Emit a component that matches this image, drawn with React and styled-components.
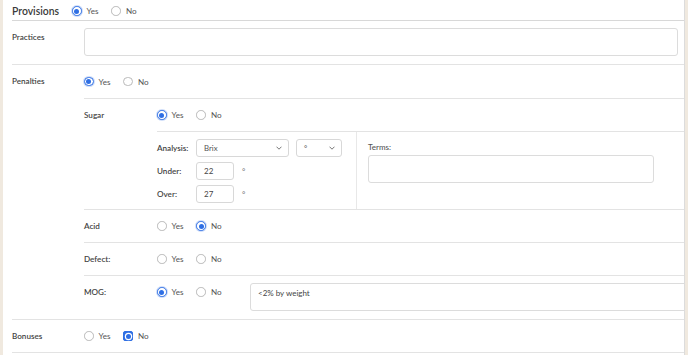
import React from 'react';
import styled, { createGlobalStyle, css } from 'styled-components';

const Global = createGlobalStyle`
  html, body { margin: 0; padding: 0; background: #f0e9df; }
  body { font-family: Lato, "Open Sans", sans-serif; color: #3d3d3d; }
  * { box-sizing: border-box; }
`;

const LINE = '#e3e3e3';
const BLUE = '#2f6fe4';

const Page = styled.div`
  display: flex;
  min-height: 100vh;
  padding: 0 3px;
  background: #f0e9df;
`;

const Panel = styled.main`
  flex: 1;
  min-width: 0;
  background: #fff;
  border-right: 1px solid #dcdcdc;
  padding-left: 9px;
  overflow: hidden;
`;

const Header = styled.header`
  display: flex;
  align-items: center;
  height: 21px;
  padding-top: 2px;
  border-bottom: 1px solid #d8d8d8;
`;

const Title = styled.h2`
  margin: 0;
  width: 60px;
  font-size: 10.4px;
  font-weight: 600;
  color: #3b3b3b;
`;

const Section = styled.section`
  display: grid;
  grid-template-columns: 72px 1fr;
  border-bottom: 1px solid ${LINE};
`;

const SubSection = styled.div`
  display: grid;
  grid-template-columns: 73px 1fr;
  ${p => p.$line && css`border-bottom: 1px solid ${LINE};`}
`;

const Label = styled.div`
  height: 32px;
  display: flex;
  align-items: center;
  font-size: 8.1px;
  font-weight: 600;
  color: #444;
`;

const Body = styled.div`
  min-width: 0;
  padding: ${p => p.$pad || '0'};
  ${p => p.$row && css`display: flex; align-items: flex-start;`}
`;

const RadioRow = styled.div`
  box-sizing: content-box;
  display: flex;
  align-items: center;
  gap: 13px;
  height: ${p => p.$h || 32}px;
  ${p => p.$w && css`flex: 0 0 ${p.$w}px;`}
  ${p => p.$line && css`border-bottom: 1px solid ${LINE};`}
`;

const Option = styled.label`
  display: inline-flex;
  align-items: center;
  gap: 5px;
  font-size: 8.1px;
  color: #555;
`;

const Dot = styled.span`
  width: 9.5px;
  height: 9.5px;
  border-radius: 50%;
  border: 1px solid ${p => (p.$on ? BLUE : '#b9b9b9')};
  background: #fff;
  display: grid;
  place-items: center;
  ${p => p.$on && css`box-shadow: 0 0 0 1px rgba(47, 111, 228, 0.22);`}
  ${p => p.$focus && css`
    border-radius: 2px;
    background: ${BLUE};
    box-shadow: none;
  `}
  &::after {
    content: '';
    width: 5px;
    height: 5px;
    border-radius: 50%;
    background: ${p => (p.$on ? BLUE : 'transparent')};
    ${p => p.$focus && css`box-shadow: 0 0 0 1.2px #fff;`}
  }
`;

const Details = styled.div`
  display: grid;
  grid-template-columns: 200px 1fr;
`;

const Measures = styled.div`
  display: flex;
  flex-direction: column;
  gap: 5px;
  padding: 7px 0 6px;
  border-right: 1px solid #e8e8e8;
`;

const MeasureRow = styled.div`
  display: flex;
  align-items: center;
  height: 18px;
`;

const MeasureLabel = styled.span`
  width: 39px;
  font-size: 8.1px;
  font-weight: 600;
  color: #444;
`;

const Select = styled.div`
  display: flex;
  align-items: center;
  justify-content: space-between;
  width: ${p => p.$w}px;
  height: 18px;
  padding: 0 6px 0 7px;
  border: 1px solid #d8d8d8;
  border-radius: 3px;
  font-size: 7.8px;
  color: #555;
  & + & { margin-left: 7px; }
`;

const Field = styled.input`
  width: 38px;
  height: 18px;
  padding: 0 0 0 7px;
  border: 1px solid #d8d8d8;
  border-radius: 3px;
  font: inherit;
  font-size: 8px;
  color: #444;
  outline: none;
`;

const Unit = styled.span`
  margin-left: 8px;
  font-size: 8px;
  color: #777;
`;

const Terms = styled.div`
  padding: 10px 0 0 11px;
`;

const TermsLabel = styled.div`
  font-size: 8px;
  line-height: 10px;
  font-weight: 500;
  color: #555;
  margin-bottom: 3px;
`;

const TextBox = styled.textarea`
  display: block;
  width: ${p => (p.$w ? `${p.$w}px` : '100%')};
  height: 28px;
  flex-shrink: 0;
  margin: ${p => p.$m || '0'};
  padding: 4px 7px;
  border: 1px solid #dcdcdc;
  border-radius: 3px;
  font: inherit;
  font-size: 8px;
  line-height: 10px;
  color: #444;
  resize: none;
  outline: none;
  background: #fff;
`;

const Chevron = () => (
  <svg width="6" height="4" viewBox="0 0 6 4">
    <polyline points="0.5,0.7 3,3.2 5.5,0.7" fill="none" stroke="#666" strokeWidth="0.9" />
  </svg>
);

const YesNo = ({ value, focus, h, w, line }) => (
  <RadioRow $h={h} $w={w} $line={line}>
    <Option><Dot $on={value === 'yes'} />Yes</Option>
    <Option><Dot $on={value === 'no'} $focus={focus && value === 'no'} />No</Option>
  </RadioRow>
);

export default function App() {
  return (
    <>
      <Global />
      <Page>
        <Panel>
          <Header>
            <Title>Provisions</Title>
            <YesNo value="yes" h={18} />
          </Header>

          <Section>
            <Label>Practices</Label>
            <Body $pad="7px 6px 8px 0">
              <TextBox readOnly />
            </Body>
          </Section>

          <Section>
            <Label>Penalties</Label>
            <Body>
              <YesNo value="yes" h={33} line />
              <SubSection $line>
                <Label>Sugar</Label>
                <Body>
                  <YesNo value="yes" line />
                  <Details>
                    <Measures>
                      <MeasureRow>
                        <MeasureLabel>Analysis:</MeasureLabel>
                        <Select $w={93}>Brix<Chevron /></Select>
                        <Select $w={46}>°<Chevron /></Select>
                      </MeasureRow>
                      <MeasureRow>
                        <MeasureLabel>Under:</MeasureLabel>
                        <Field readOnly value="22" />
                        <Unit>°</Unit>
                      </MeasureRow>
                      <MeasureRow>
                        <MeasureLabel>Over:</MeasureLabel>
                        <Field readOnly value="27" />
                        <Unit>°</Unit>
                      </MeasureRow>
                    </Measures>
                    <Terms>
                      <TermsLabel>Terms:</TermsLabel>
                      <TextBox readOnly $w={286} />
                    </Terms>
                  </Details>
                </Body>
              </SubSection>
              <SubSection $line>
                <Label>Acid</Label>
                <Body><YesNo value="no" /></Body>
              </SubSection>
              <SubSection $line>
                <Label>Defect:</Label>
                <Body><YesNo /></Body>
              </SubSection>
              <SubSection>
                <Label>MOG:</Label>
                <Body $row $pad="0 0 8px 0">
                  <YesNo value="yes" w={93} />
                  <TextBox readOnly $w={460} $m="7px 0 0 0" defaultValue="<2% by weight" />
                </Body>
              </SubSection>
            </Body>
          </Section>

          <Section>
            <Label>Bonuses</Label>
            <Body><YesNo value="no" focus /></Body>
          </Section>
        </Panel>
      </Page>
    </>
  );
}
